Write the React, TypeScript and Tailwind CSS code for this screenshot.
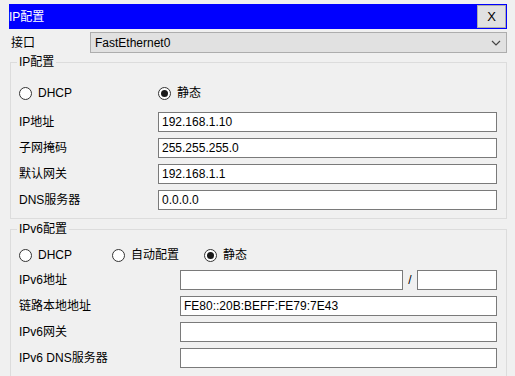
import React from "react";

const font = "font-['Liberation_Sans','Noto_Sans_CJK_SC',sans-serif]";

function Radio({ checked, label, className = "" }: { checked?: boolean; label: string; className?: string }) {
  return (
    <div className={`flex items-center ${className}`}>
      <span className="w-[13px] h-[13px] rounded-full border border-[#333333] bg-white flex items-center justify-center">
        {checked && <span className="w-[7px] h-[7px] rounded-full bg-[#1a1a1a]" />}
      </span>
      <span className="ml-[6px] text-[12px] text-black">{label}</span>
    </div>
  );
}

function Field({ value = "" }: { value?: string }) {
  return (
    <div className="h-[20px] flex-1 border border-[#7a7a7a] bg-white px-[3px] flex items-center text-[12px] text-black">
      {value}
    </div>
  );
}

function Row({ label, value, labelW }: { label: string; value?: string; labelW: string }) {
  return (
    <div className="flex items-center h-[20px]">
      <div className={`${labelW} text-[12px] text-black`}>{label}</div>
      <Field value={value} />
    </div>
  );
}

function Group({ title, children, className = "" }: { title: string; children: React.ReactNode; className?: string }) {
  return (
    <div className={`relative ml-[10px] w-[497px] border border-[#dcdcdc] pl-[8px] pr-[9px] ${className}`}>
      <span className="absolute -top-[9px] left-[6px] bg-[#f0f0f0] px-[2px] text-[12px] leading-[16px] text-black">
        {title}
      </span>
      {children}
    </div>
  );
}

export default function App() {
  return (
    <div className={`w-[515px] h-[376px] overflow-hidden bg-[#f0f0f0] ${font}`}>
      {/* title bar */}
      <div className="mt-[4px] ml-[9px] w-[498px] h-[25px] bg-[#0000ff] flex items-center justify-between">
        <span className="text-white text-[12px]">IP配置</span>
        <button className="w-[29px] h-[23px] mr-[1px] bg-[#e1e1e1] border border-[#adadad] text-[13px] text-black flex items-center justify-center">
          X
        </button>
      </div>

      {/* interface */}
      <div className="mt-[3px] flex items-center h-[21px]">
        <span className="ml-[11px] w-[79px] text-[12px] text-black">接口</span>
        <div className="w-[417px] h-[21px] bg-[#e1e1e1] border border-[#adadad] flex items-center justify-between pl-[4px] pr-[5px] text-[12px] text-black">
          <span>FastEthernet0</span>
          <svg width="10" height="6" viewBox="0 0 10 6" fill="none" stroke="#444" strokeWidth="1.2">
            <path d="M1 1 L5 5 L9 1" />
          </svg>
        </div>
      </div>

      {/* IPv4 */}
      <Group title="IP配置" className="mt-[9px] pt-[20px] pb-[8px]">
        <div className="flex items-center h-[20px]">
          <Radio label="DHCP" className="w-[139px]" />
          <Radio label="静态" checked />
        </div>
        <div className="mt-[9px] flex flex-col gap-[6px]">
          <Row labelW="w-[139px]" label="IP地址" value="192.168.1.10" />
          <Row labelW="w-[139px]" label="子网掩码" value="255.255.255.0" />
          <Row labelW="w-[139px]" label="默认网关" value="192.168.1.1" />
          <Row labelW="w-[139px]" label="DNS服务器" value="0.0.0.0" />
        </div>
      </Group>

      {/* IPv6 */}
      <Group title="IPv6配置" className="mt-[10px] pt-[15px] pb-[24px]">
        <div className="flex items-center h-[20px]">
          <Radio label="DHCP" className="w-[93px]" />
          <Radio label="自动配置" className="w-[92px]" />
          <Radio label="静态" checked />
        </div>
        <div className="mt-[5px] flex flex-col gap-[6px]">
          <div className="flex items-center h-[20px]">
            <div className="w-[161px] text-[12px] text-black">IPv6地址</div>
            <div className="w-[223px] flex"><Field /></div>
            <span className="w-[14px] text-center text-[12px] text-black">/</span>
            <div className="w-[80px] flex"><Field /></div>
          </div>
          <Row labelW="w-[161px]" label="链路本地地址" value="FE80::20B:BEFF:FE79:7E43" />
          <Row labelW="w-[161px]" label="IPv6网关" />
          <Row labelW="w-[161px]" label="IPv6 DNS服务器" />
        </div>
      </Group>
    </div>
  );
}
